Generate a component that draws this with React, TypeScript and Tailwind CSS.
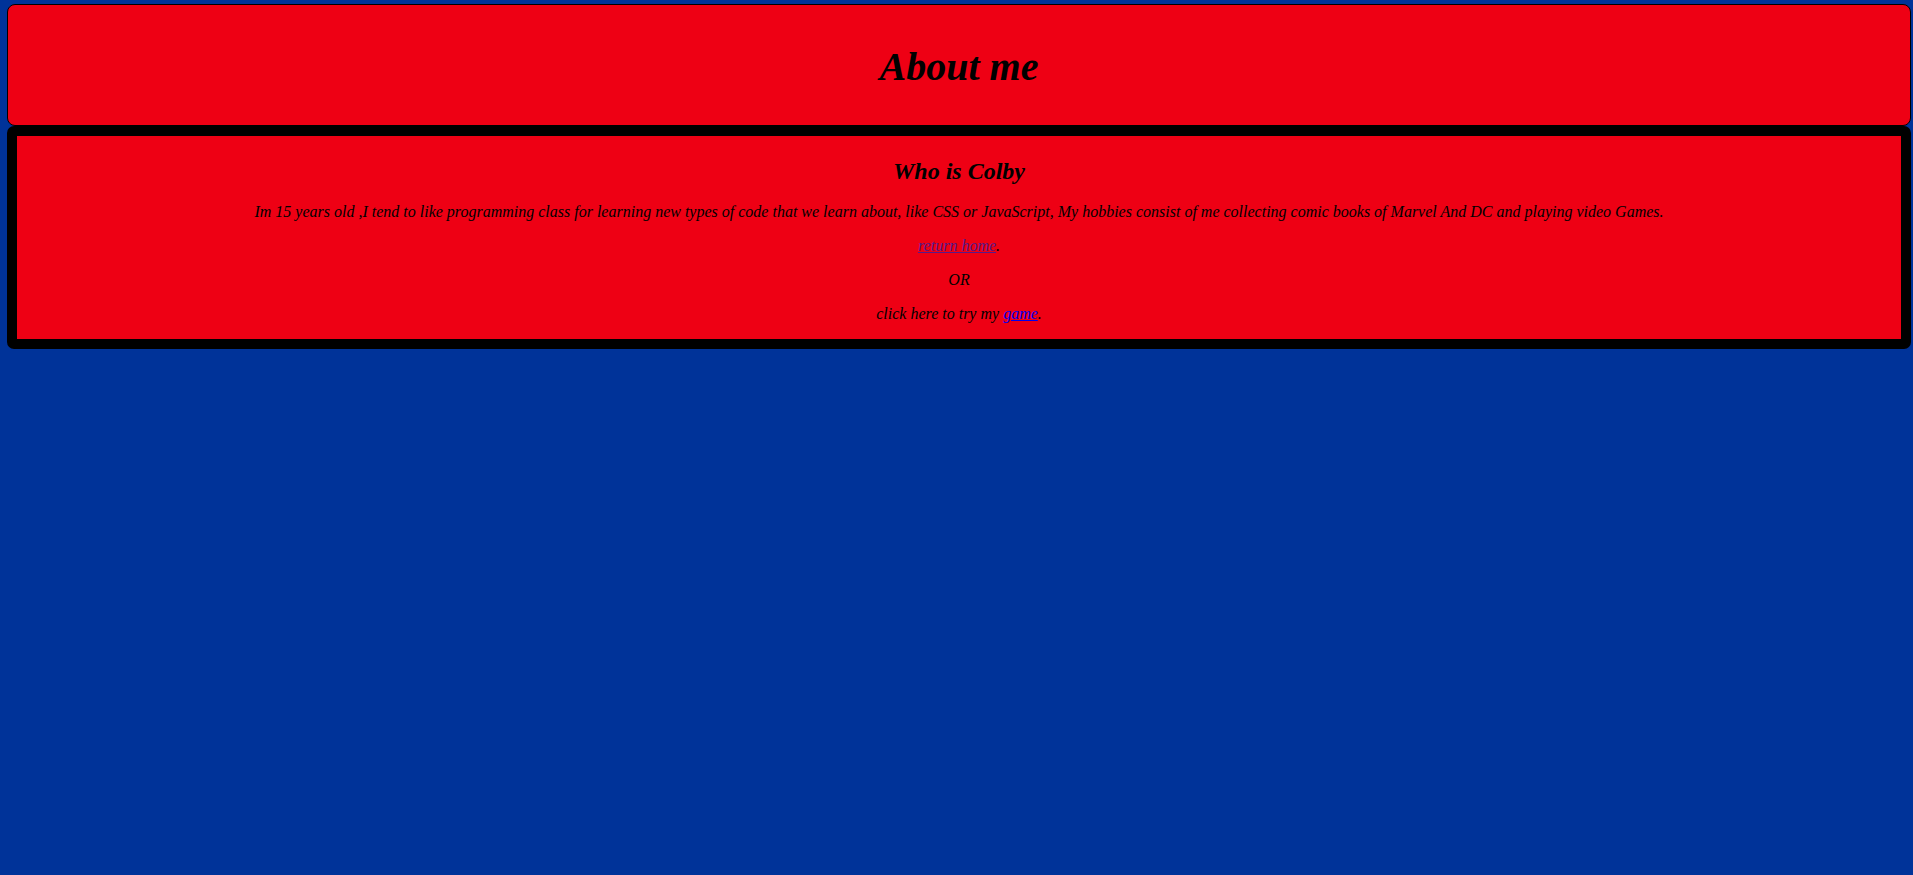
import React from "react";

export default function App() {
  return (
    <div
      className="min-h-[875px] w-full bg-[#003399] pt-[4px] pl-[7px] pr-[2px] italic text-black"
      style={{ fontFamily: '"Liberation Serif", "Times New Roman", serif' }}
    >
      <div className="h-[122px] rounded-[8px] border border-black bg-[#ee0014] flex items-center justify-center">
        <h1 className="text-[40px] font-bold leading-[normal] mt-[2px]">About me</h1>
      </div>
      <div className="rounded-[7px] border-[10px] border-black bg-[#ee0014] text-center">
        <h2 className="text-[24px] font-bold leading-[normal] mt-[22px] mb-[18px]">Who is Colby</h2>
        <p className="text-[16px] leading-[normal] my-4">
          Im 15 years old ,I tend to like programming class for learning new types of code that we learn about, like CSS or JavaScript, My hobbies consist of me collecting comic books of Marvel And DC and playing video Games.
        </p>
        <p className="text-[16px] leading-[normal] my-4">
          <a href="#" className="underline text-[#551a8b]">return home</a>.
        </p>
        <p className="text-[16px] leading-[normal] my-4">OR</p>
        <p className="text-[16px] leading-[normal] my-4">
          click here to try my <a href="#" className="underline text-[#0000ee]">game</a>.
        </p>
      </div>
    </div>
  );
}
